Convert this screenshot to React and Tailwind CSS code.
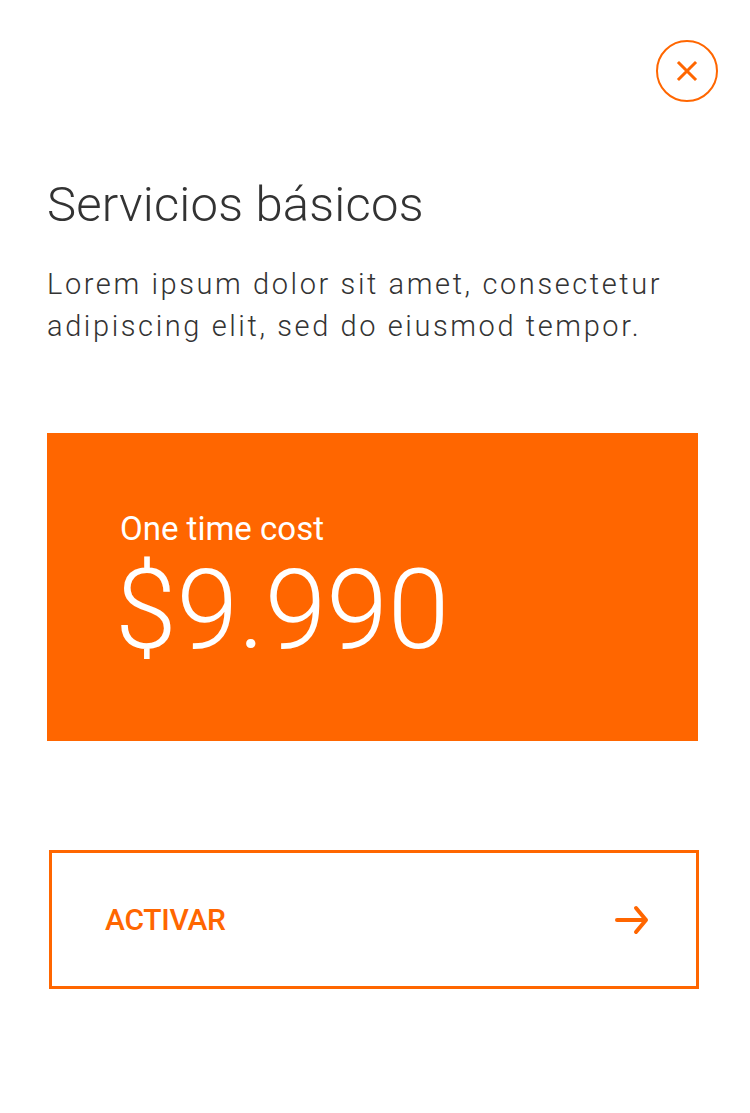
const ArrowRight = () => (
  <svg width="36" height="30" viewBox="0 0 36 30" fill="none" stroke="#ff6600" strokeWidth="4" strokeLinecap="round" strokeLinejoin="round">
    <path d="M3 15h29M22 3l10 12-10 12" />
  </svg>
)

const App = () => {
  return (
    <div className="w-[750px] h-[1113px] bg-white font-['Roboto',sans-serif] text-[#333333]">
      {/* close */}
      <div className="flex justify-end pt-[40px] pr-[32px]">
        <button className="w-[62px] h-[62px] rounded-full border-2 border-[#ff6600] flex items-center justify-center">
          <svg width="22" height="22" viewBox="0 0 22 22" stroke="#ff6600" strokeWidth="3" strokeLinecap="square">
            <path d="M3 3l16 16M19 3L3 19" />
          </svg>
        </button>
      </div>

      <div className="px-[47px]">
        <h1 className="mt-[73px] text-[49px] leading-[60px] font-light tracking-[0.2px]">Servicios básicos</h1>
        <p className="mt-[28px] text-[29px] leading-[42px] font-light tracking-[2.6px]">
          Lorem ipsum dolor sit amet, consectetur adipiscing elit, sed do eiusmod tempor.
        </p>

        <div className="mt-[86px] w-[651px] h-[308px] bg-[#ff6600] text-white flex flex-col pl-[73px] pt-[76px]">
          <div className="text-[33px] leading-[40px]">One time cost</div>
          <div className="mt-[6px] -ml-[5px] text-[111px] leading-[110px] font-light">$9.990</div>
        </div>

        <button className="mt-[109px] ml-[2px] w-[650px] h-[139px] border-[3px] border-[#ff6600] flex items-center justify-between pl-[53px] pr-[46px]">
          <span className="text-[30px] font-medium text-[#ff6600] tracking-[-0.3px]">ACTIVAR</span>
          <ArrowRight />
        </button>
      </div>
    </div>
  )
}

export default App
